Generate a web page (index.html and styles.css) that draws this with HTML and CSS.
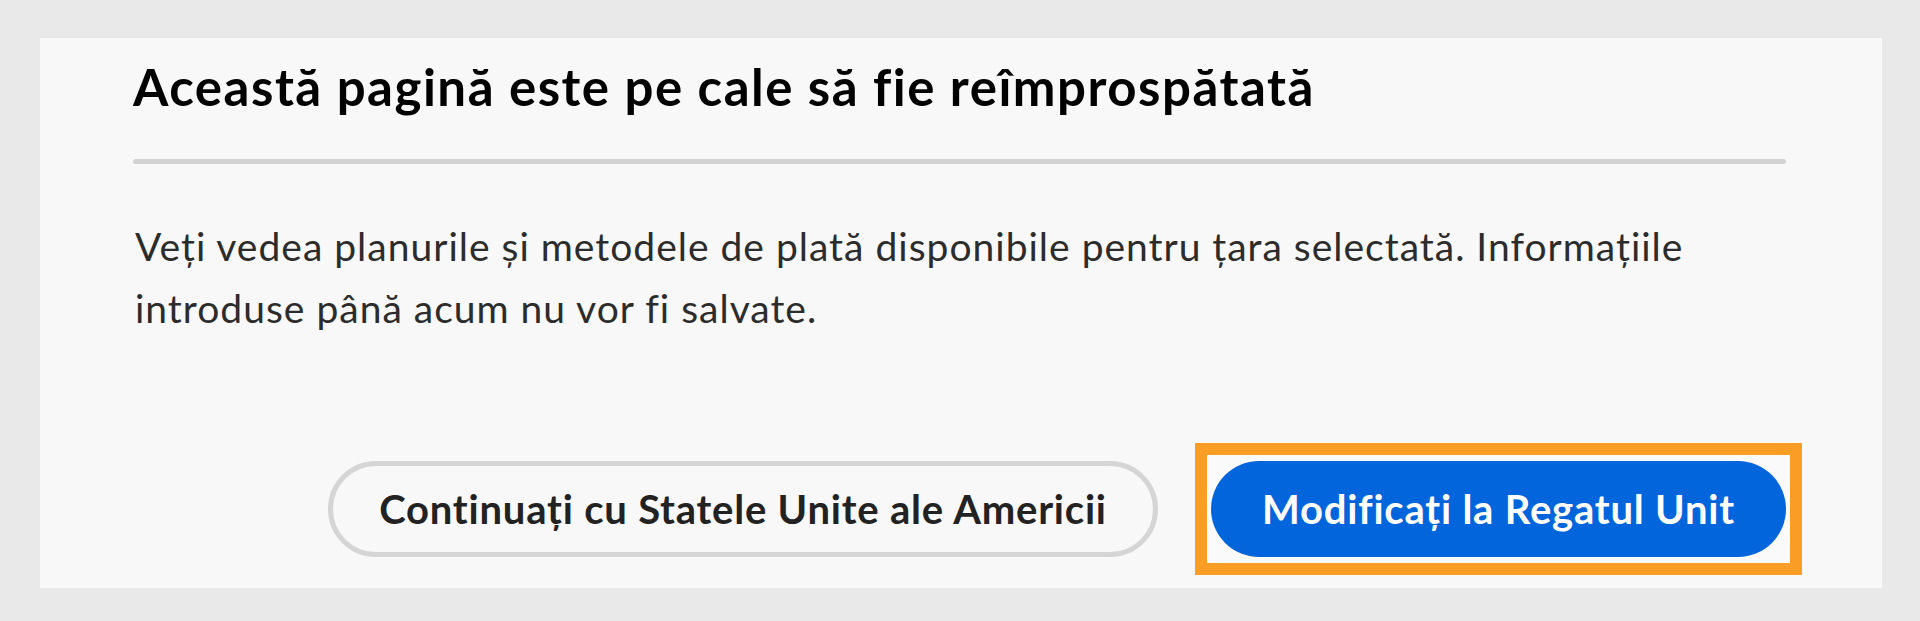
FILE: index.html
```html
<!DOCTYPE html>
<html lang="ro">
<head>
<meta charset="utf-8">
<title>Această pagină este pe cale să fie reîmprospătată</title>
<link rel="stylesheet" href="styles.css">
</head>
<body>
<div class="page">
  <section class="dialog">
    <h1 class="dialog-title">Această pagină este pe cale să fie reîmprospătată</h1>
    <hr class="dialog-divider">
    <p class="dialog-text">Veți vedea planurile și metodele de plată disponibile pentru țara selectată. Informațiile introduse până acum nu vor fi salvate.</p>
    <div class="dialog-actions">
      <button class="btn btn-secondary" type="button">Continuați cu Statele Unite ale Americii</button>
      <span class="highlight">
        <button class="btn btn-primary" type="button">Modificați la Regatul Unit</button>
      </span>
    </div>
  </section>
</div>
</body>
</html>
```

FILE: styles.css
```css
* { box-sizing: border-box; }
html, body {
  margin: 0;
  padding: 0;
}
body {
  background: #e9e9e9;
  font-family: Lato, "Noto Sans", sans-serif;
  width: 1920px;
  height: 621px;
  overflow: hidden;
}
.page {
  padding: 38px 38px 0 40px;
}
.dialog {
  background: #f8f8f8;
  width: 1842px;
  height: 550px;
  padding: 18px 96px 0 93px;
}
.dialog-title {
  margin: 0;
  font-size: 51px;
  line-height: 61px;
  font-weight: 700;
  letter-spacing: 1.5px;
  color: #000;
}
.dialog-divider {
  margin: 42px 0 0 0;
  border: 0;
  height: 5px;
  border-radius: 3px;
  background: #d3d3d3;
}
.dialog-text {
  margin: 51px 0 0 2px;
  font-size: 39px;
  line-height: 62px;
  letter-spacing: 1px;
  color: #2c2c2c;
}
.dialog-actions {
  margin: 104px -16px 0 0;
  display: flex;
  justify-content: flex-end;
  align-items: center;
  gap: 37px;
}
.btn {
  font-family: Lato, "Noto Sans", sans-serif;
  font-size: 40px;
  font-weight: 700;
  letter-spacing: 0.8px;
  height: 96px;
  border-radius: 48px;
  padding: 0;
  cursor: pointer;
}
.btn-secondary {
  width: 830px;
  background: #f8f8f8;
  border: 5px solid #d5d5d5;
  color: #222;
}
.highlight {
  display: inline-flex;
  border: 12px solid #f99d24;
  padding: 6px 4px;
  background: #fafafa;
}
.btn-primary {
  width: 575px;
  background: #0265dc;
  border: 0;
  color: #fff;
}
```
